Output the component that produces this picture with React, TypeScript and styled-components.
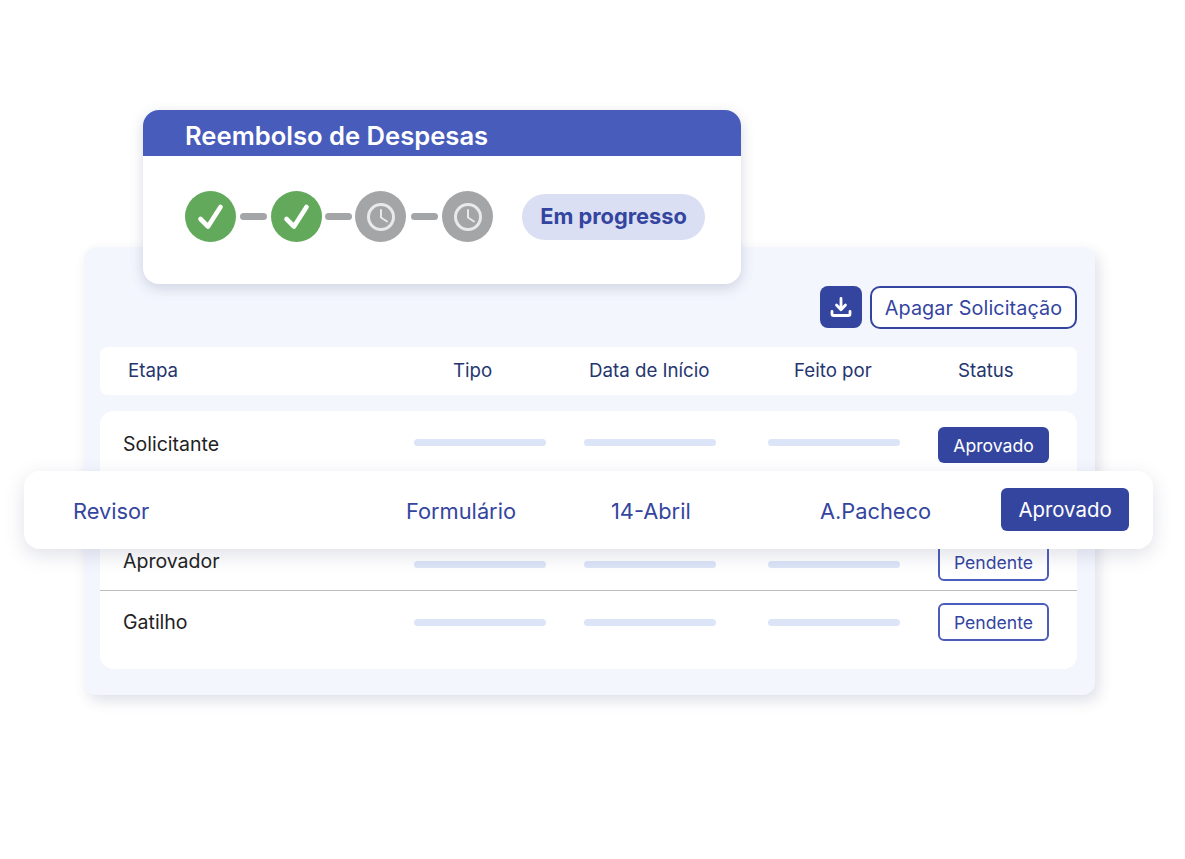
import styled, { createGlobalStyle } from 'styled-components';

const navy = '#34459f';
const barColor = '#dce4f7';

const GlobalStyle = createGlobalStyle`
  html, body {
    margin: 0;
    background: #fff;
    font-family: Inter, "Liberation Sans", sans-serif;
  }
`;

const Stage = styled.main`
  position: relative;
  width: 1185px;
  height: 859px;
  padding: 247px 90px 0 84px;
  box-sizing: border-box;
  overflow: hidden;
`;

const Panel = styled.section`
  height: 448px;
  padding: 39px 18px 0 16px;
  box-sizing: border-box;
  background: #f3f6fd;
  border-radius: 12px;
  box-shadow: 4px 6px 14px rgba(60, 70, 110, 0.16);
`;

const Toolbar = styled.div`
  display: flex;
  justify-content: flex-end;
  gap: 8px;
  height: 43px;
`;

const IconButton = styled.div`
  width: 42px;
  height: 42px;
  display: flex;
  align-items: center;
  justify-content: center;
  background: ${navy};
  border-radius: 8px;
`;

const OutlineButton = styled.div`
  width: 207px;
  height: 43px;
  box-sizing: border-box;
  display: flex;
  align-items: center;
  justify-content: center;
  border: 2px solid ${navy};
  border-radius: 10px;
  background: #fff;
  color: ${navy};
  font-size: 19.8px;
  letter-spacing: 0.1px;
`;

const HeaderRow = styled.div`
  display: grid;
  grid-template-columns: 325px 136px 205px 164px auto;
  align-items: center;
  height: 48px;
  margin-top: 18px;
  padding: 0 0 2px 28px;
  box-sizing: border-box;
  background: #fff;
  border-radius: 8px;
  color: #25366f;
  font-size: 18.7px;
`;

const TableBody = styled.div`
  height: 258px;
  margin-top: 16px;
  background: #fff;
  border-radius: 14px;
`;

const Row = styled.div<{ $height: number; $divided?: boolean; $drop?: number }>`
  display: grid;
  grid-template-columns: 291px 170px 184px 170px 111px;
  align-items: center;
  height: ${(p) => p.$height}px;
  padding: ${(p) => p.$drop ?? 0}px 0 0 23px;
  box-sizing: border-box;
  border-bottom: ${(p) => (p.$divided ? '1px solid #bcbcbc' : 'none')};
  color: #222;
  font-size: 19.5px;
`;

const RowLabel = styled.span<{ $shift?: number }>`
  margin-top: ${(p) => p.$shift ?? 0}px;
`;

const Bar = styled.div<{ $drop?: number }>`
  width: 131.5px;
  height: 7px;
  margin-top: ${(p) => p.$drop ?? 0}px;
  border-radius: 4px;
  background: ${barColor};
`;

const StatusTag = styled.div<{ $filled?: boolean }>`
  height: ${(p) => (p.$filled ? 36 : 38)}px;
  margin-top: ${(p) => (p.$filled ? 6 : 0)}px;
  box-sizing: border-box;
  display: flex;
  align-items: center;
  justify-content: center;
  border-radius: 6px;
  font-size: 17.6px;
  border: ${(p) => (p.$filled ? 'none' : '2px solid #4a5dbb')};
  background: ${(p) => (p.$filled ? navy : '#fff')};
  color: ${(p) => (p.$filled ? '#fff' : navy)};
`;

const ProcessCard = styled.section`
  position: absolute;
  left: 143px;
  top: 110px;
  width: 598px;
  height: 174px;
  background: #fff;
  border-radius: 16px;
  box-shadow: 0 4px 14px rgba(60, 70, 110, 0.2);
  overflow: hidden;
`;

const CardTitle = styled.h2`
  margin: 0;
  height: 46px;
  padding: 0 0 0 42px;
  background: #485cbc;
  color: #fff;
  font-size: 25.6px;
  font-weight: 600;
  line-height: 51px;
`;

const CardBody = styled.div`
  display: flex;
  align-items: center;
  height: 51px;
  margin-top: 35px;
  padding-left: 42px;
`;

const Step = styled.div<{ $done?: boolean }>`
  width: 51px;
  height: 51px;
  flex: none;
  display: flex;
  align-items: center;
  justify-content: center;
  border-radius: 50%;
  background: ${(p) => (p.$done ? '#63a95b' : '#a4a5a7')};
`;

const Connector = styled.div<{ $before: number; $after: number }>`
  width: 27px;
  height: 7px;
  margin: 0 ${(p) => p.$after}px 0 ${(p) => p.$before}px;
  flex: none;
  border-radius: 4px;
  background: #a4a5a7;
`;

const ProgressPill = styled.div`
  width: 183px;
  height: 46px;
  margin-left: 29px;
  padding-bottom: 1px;
  box-sizing: border-box;
  display: flex;
  align-items: center;
  justify-content: center;
  border-radius: 23px;
  background: #dbdff3;
  color: ${navy};
  font-size: 21.8px;
  font-weight: 700;
`;

const FloatingRow = styled.div`
  position: absolute;
  left: 24px;
  top: 471px;
  width: 1129px;
  height: 78px;
  box-sizing: border-box;
  display: grid;
  grid-template-columns: 333px 205px 209px 181px 128px;
  align-items: center;
  padding: 2px 0 0 49px;
  background: #fff;
  border-radius: 16px;
  box-shadow: 0 6px 20px rgba(60, 70, 110, 0.16);
  color: ${navy};
  font-size: 21.8px;
`;

const FloatingTag = styled.div`
  height: 43px;
  margin-top: -3px;
  display: flex;
  align-items: center;
  justify-content: center;
  border-radius: 6px;
  background: ${navy};
  color: #fff;
  font-size: 20.4px;
`;

const CheckIcon = () => (
  <svg width="30" height="30" viewBox="0 0 30 30" fill="none">
    <path d="M4.5 17 L12 24.5 L24.5 5" stroke="#fff" strokeWidth="4.6" strokeLinecap="round" strokeLinejoin="round" />
  </svg>
);

const ClockIcon = () => (
  <svg width="30" height="30" viewBox="0 0 30 30" fill="none">
    <circle cx="15" cy="15" r="12.5" stroke="#e9e9e9" strokeWidth="3" />
    <path d="M15 8 V15.5 L21 19.5" stroke="#e9e9e9" strokeWidth="2" strokeLinecap="round" strokeLinejoin="round" />
  </svg>
);

const DownloadIcon = () => (
  <svg width="24" height="24" viewBox="0 0 24 24" fill="none">
    <path d="M12 3.5 V14 M7.5 10 L12 14.8 L16.5 10" stroke="#fff" strokeWidth="2.8" strokeLinecap="round" strokeLinejoin="round" />
    <path d="M3 16.5 V19 Q3 20.5 4.5 20.5 H19.5 Q21 20.5 21 19 V16.5" stroke="#fff" strokeWidth="2.8" strokeLinecap="round" strokeLinejoin="round" />
  </svg>
);

const rows = [
  { name: 'Solicitante', status: 'Aprovado', filled: true, height: 62, labelShift: 4 },
  { name: '', status: '', filled: false, height: 57 },
  { name: 'Aprovador', status: 'Pendente', filled: false, height: 61, divided: true, drop: 4, barDrop: 4, labelShift: -2 },
  { name: 'Gatilho', status: 'Pendente', filled: false, height: 62 },
];

const App = () => (
  <Stage>
    <GlobalStyle />
    <Panel>
      <Toolbar>
        <IconButton>
          <DownloadIcon />
        </IconButton>
        <OutlineButton>Apagar Solicitação</OutlineButton>
      </Toolbar>
      <HeaderRow>
        <span>Etapa</span>
        <span>Tipo</span>
        <span>Data de Início</span>
        <span>Feito por</span>
        <span>Status</span>
      </HeaderRow>
      <TableBody>
        {rows.map((row) =>
          row.name ? (
            <Row key={row.name} $height={row.height} $divided={row.divided} $drop={row.drop}>
              <RowLabel $shift={row.labelShift}>{row.name}</RowLabel>
              <Bar $drop={row.barDrop} />
              <Bar $drop={row.barDrop} />
              <Bar $drop={row.barDrop} />
              <StatusTag $filled={row.filled}>{row.status}</StatusTag>
            </Row>
          ) : (
            <Row key="hidden" $height={row.height} />
          ),
        )}
      </TableBody>
    </Panel>
    <ProcessCard>
      <CardTitle>Reembolso de Despesas</CardTitle>
      <CardBody>
        <Step $done>
          <CheckIcon />
        </Step>
        <Connector $before={4} $after={4} />
        <Step $done>
          <CheckIcon />
        </Step>
        <Connector $before={3} $after={3} />
        <Step>
          <ClockIcon />
        </Step>
        <Connector $before={5} $after={4} />
        <Step>
          <ClockIcon />
        </Step>
        <ProgressPill>Em progresso</ProgressPill>
      </CardBody>
    </ProcessCard>
    <FloatingRow>
      <span>Revisor</span>
      <span>Formulário</span>
      <span>14-Abril</span>
      <span>A.Pacheco</span>
      <FloatingTag>Aprovado</FloatingTag>
    </FloatingRow>
  </Stage>
);

export default App;
